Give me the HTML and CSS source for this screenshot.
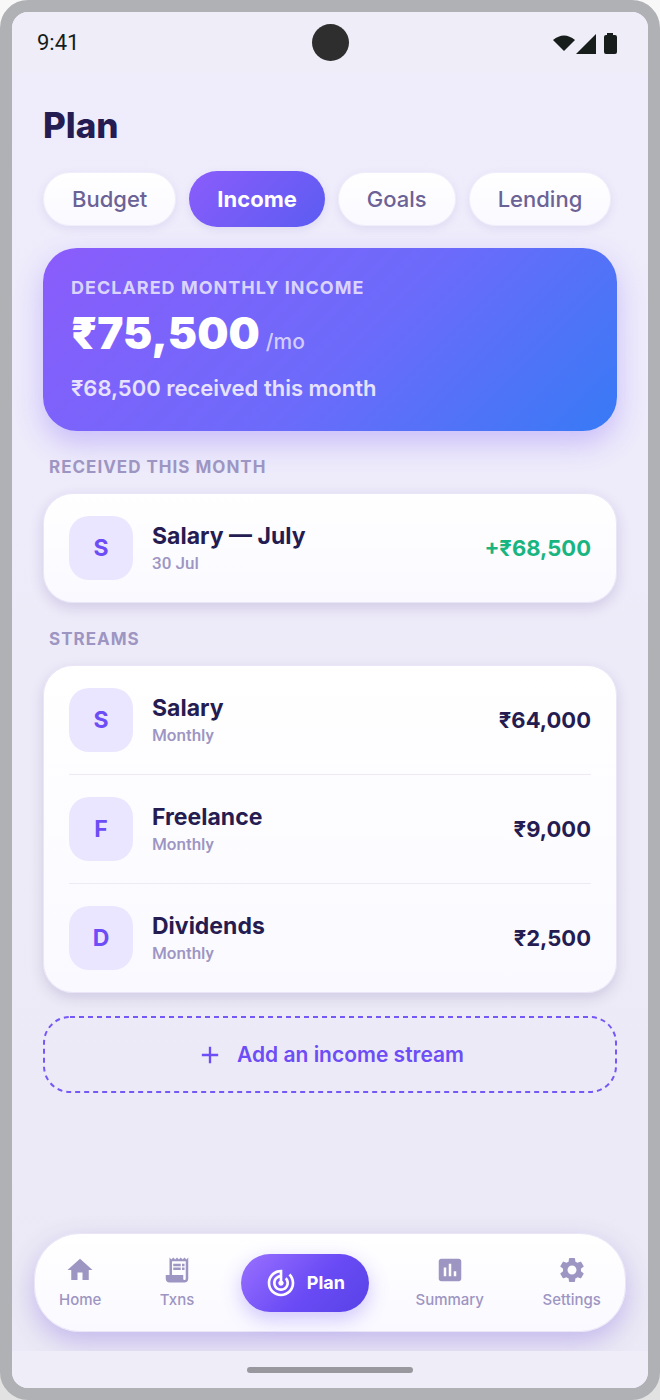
FILE: index.html
```html
<!DOCTYPE html>
<html lang="en">

<head>
    <meta charset="UTF-8">
    <meta name="viewport" content="width=device-width,initial-scale=1" />

    <title>Plan - Income</title>
    <link rel="stylesheet" href="styles.css">
</head>

<body>
    <div class="phone">
        <header class="status-bar">
            <span class="clock">9:41</span>
            <span class="camera"></span>
            <svg class="status-icons" viewBox="0 0 64 22" width="64" height="22" aria-hidden="true">
                <path d="M0 8Q11 -1 22 8L11 19z" />
                <path d="M43 2v20H23z" />
                <path d="M54 1h6v2h2q2 0 2 2v15q0 2-2 2h-9q-2 0-2-2V5q0-2 2-2h1z" />
            </svg>
        </header>

        <main class="content">
            <h1>Plan</h1>

            <div class="tabs">
                <button class="tab">Budget</button>
                <button class="tab tab-active">Income</button>
                <button class="tab">Goals</button>
                <button class="tab">Lending</button>
            </div>

            <section class="hero">
                <p class="hero-label">DECLARED MONTHLY INCOME</p>
                <p class="hero-amount">₹75,500 <span>/mo</span></p>
                <p class="hero-note">₹68,500 received this month</p>
            </section>

            <h2>RECEIVED THIS MONTH</h2>
            <ul class="card">
                <li class="row">
                    <span class="avatar">S</span>
                    <div class="row-text">
                        <h3>Salary — July</h3>
                        <p>30 Jul</p>
                    </div>
                    <span class="amount amount-in">+₹68,500</span>
                </li>
            </ul>

            <h2>STREAMS</h2>
            <ul class="card">
                <li class="row">
                    <span class="avatar">S</span>
                    <div class="row-text">
                        <h3>Salary</h3>
                        <p>Monthly</p>
                    </div>
                    <span class="amount">₹64,000</span>
                </li>
                <li class="row">
                    <span class="avatar">F</span>
                    <div class="row-text">
                        <h3>Freelance</h3>
                        <p>Monthly</p>
                    </div>
                    <span class="amount">₹9,000</span>
                </li>
                <li class="row">
                    <span class="avatar">D</span>
                    <div class="row-text">
                        <h3>Dividends</h3>
                        <p>Monthly</p>
                    </div>
                    <span class="amount">₹2,500</span>
                </li>
            </ul>

            <button class="add-button">
                <svg class="dashes" aria-hidden="true">
                    <rect width="100%" height="100%" rx="26" />
                </svg>
                <svg class="plus" viewBox="0 0 24 24" width="28" height="28" aria-hidden="true">
                    <path d="M12 5v14M5 12h14" />
                </svg>
                Add an income stream
            </button>
        </main>

        <nav class="nav">
            <a class="nav-item" href="#home">
                <svg viewBox="0 0 24 24" width="30" height="30" aria-hidden="true">
                    <path d="M10 20v-6h4v6h5v-8h3L12 3 2 12h3v8z" />
                </svg>
                Home
            </a>
            <a class="nav-item" href="#txns">
                <svg viewBox="0 0 24 24" width="30" height="30" aria-hidden="true">
                    <path d="M19.500 3.500L18 2l-1.500 1.500L15 2l-1.500 1.500L12 2l-1.500 1.500L9 2 7.500 3.500 6 2v14H3v3c0 1.660 1.340 3 3 3h12c1.660 0 3-1.340 3-3V2zM19 19c0 .55-.45 1-1 1s-1-.45-1-1v-3H8V5h11z" />
                    <path d="M9 7h6v2H9zM16 7h2v2h-2zM9 10h6v2H9zM16 10h2v2h-2z" />
                </svg>
                Txns
            </a>
            <a class="nav-item nav-active" href="#plan">
                <svg viewBox="0 0 24 24" width="32" height="32" aria-hidden="true">
                    <path d="M19.070 4.930l-1.410 1.410C19.100 7.790 20 9.790 20 12c0 4.420-3.580 8-8 8s-8-3.580-8-8c0-4.080 3.050-7.440 7-7.930v2.020C8.160 6.570 6 9.030 6 12c0 3.310 2.690 6 6 6s6-2.690 6-6c0-1.660-.67-3.160-1.760-4.240l-1.410 1.410C15.550 9.900 16 10.900 16 12c0 2.210-1.790 4-4 4s-4-1.790-4-4c0-1.860 1.280-3.410 3-3.860v2.140c-.6.35-1 .98-1 1.720 0 1.100.9 2 2 2s2-.9 2-2c0-.74-.4-1.380-1-1.720V2h-1C6.480 2 2 6.480 2 12s4.480 10 10 10 10-4.480 10-10c0-2.760-1.120-5.260-2.930-7.070z" />
                </svg>
                Plan
            </a>
            <a class="nav-item" href="#summary">
                <svg viewBox="0 0 24 24" width="30" height="30" aria-hidden="true">
                    <path d="M19 3H5c-1.100 0-2 .9-2 2v14c0 1.100.9 2 2 2h14c1.100 0 2-.9 2-2V5c0-1.100-.9-2-2-2zM9 17H7v-7h2zM13 17h-2V7h2zM17 17h-2v-4h2z" />
                </svg>
                Summary
            </a>
            <a class="nav-item" href="#settings">
                <svg viewBox="0 0 24 24" width="30" height="30" aria-hidden="true">
                    <path d="M19.140 12.940c.04-.3.060-.61.060-.94 0-.32-.02-.64-.07-.94l2.030-1.580c.18-.14.23-.41.12-.61l-1.920-3.320c-.12-.22-.37-.29-.59-.22l-2.390.96c-.5-.38-1.030-.7-1.620-.94l-.36-2.540c-.04-.24-.24-.41-.48-.41h-3.840c-.24 0-.43.17-.47.41l-.36 2.540c-.59.24-1.130.57-1.620.94l-2.390-.96c-.22-.08-.47 0-.59.22L2.740 8.870c-.12.21-.08.47.12.61l2.030 1.580c-.05.3-.09.63-.09.94s.02.64.07.94l-2.030 1.580c-.18.14-.23.41-.12.61l1.920 3.320c.12.22.37.29.59.22l2.390-.96c.5.38 1.030.7 1.620.94l.36 2.540c.05.24.24.41.48.41h3.840c.24 0 .44-.17.47-.41l.36-2.540c.59-.24 1.130-.56 1.620-.94l2.390.96c.22.08.47 0 .59-.22l1.920-3.320c.12-.22.07-.47-.12-.61l-2.010-1.580zM12 15.600c-1.980 0-3.600-1.620-3.600-3.600s1.620-3.600 3.600-3.600 3.600 1.620 3.600 3.600-1.620 3.600-3.600 3.600z" />
                </svg>
                Settings
            </a>
        </nav>

        <footer class="home-bar"><span></span></footer>
    </div>
</body>

</html>
```

FILE: styles.css
```css
* {
    box-sizing: border-box;
}

body {
    margin: 0;
    background: linear-gradient(#f8f8f8, #e2e2e2);
    color: #251c52;
    font-family: Inter, "Liberation Sans", sans-serif;
}

h1, h2, h3, p, ul {
    margin: 0;
    padding: 0;
}

button {
    font-family: inherit;
    border: 0;
}

.phone {
    display: flex;
    flex-direction: column;
    min-height: 100vh;
    border: 12px solid #b0b1b5;
    border-radius: 28px;
    overflow: hidden;
    background: linear-gradient(#efedfb, #eeebfb 30%, #edebf7 60%, #ebe9f5);
}

/* status bar */
.status-bar {
    display: grid;
    grid-template-columns: 1fr auto 1fr;
    align-items: center;
    height: 61px;
    padding: 0 25px;
    background: #efedf8;
}

.clock {
    font-family: Roboto, sans-serif;
    font-size: 22px;
    line-height: 24px;
    color: #171d1b;
}

.camera {
    width: 37px;
    height: 37px;
    border-radius: 50%;
    background: #2e2e2e;
}

.status-icons {
    justify-self: end;
    margin-right: 6px;
    fill: #171d1b;
}

/* page */
.content {
    flex: 1;
    padding: 32px 31px 0;
}

h1 {
    font-size: 35px;
    line-height: 40px;
    font-weight: 800;
}

h2 {
    margin: 24px 0 14px;
    padding-left: 6px;
    font-size: 17px;
    line-height: 24px;
    font-weight: 700;
    letter-spacing: 1px;
    color: #9d95c2;
}

.tabs {
    display: flex;
    align-items: center;
    gap: 13px;
    margin: 26px 0 21px;
}

.tab {
    height: 54px;
    padding: 0 28px;
    border: 1px solid #f1eefb;
    border-radius: 28px;
    background: linear-gradient(#ffffff, #faf9ff);
    color: #6b6296;
    font-size: 22px;
    font-weight: 500;
    box-shadow: 0 3px 8px rgba(90, 70, 170, 0.1);
}

.tab-active {
    height: 56px;
    border: 0;
    background: linear-gradient(135deg, #8b5cfb, #5b5cf2);
    color: #ffffff;
    font-weight: 700;
}

.hero {
    padding: 28px;
    border-radius: 34px;
    background: linear-gradient(135deg, #8b5cfb, #6b6bfa 55%, #377af5);
    color: #ffffff;
    box-shadow: 0 12px 28px rgba(124, 92, 250, 0.32);
}

.hero-label {
    font-size: 18px;
    line-height: 24px;
    font-weight: 700;
    letter-spacing: 1px;
    color: #dbd4fe;
}

.hero-amount {
    display: flex;
    align-items: baseline;
    gap: 6px;
    margin: 5px 0 12px;
    font-size: 44px;
    line-height: 56px;
    font-weight: 900;
}

.hero-amount span {
    font-size: 21px;
    line-height: 28px;
    font-weight: 500;
    color: #d3cdfe;
}

.hero-note {
    font-size: 22px;
    line-height: 30px;
    font-weight: 600;
    color: #e6e2ff;
}

.card {
    padding: 0 25px;
    border: 1px solid #eae6f8;
    border-radius: 30px;
    background: linear-gradient(#ffffff, #faf9ff);
    box-shadow: 0 5px 14px rgba(60, 40, 130, 0.16);
    list-style: none;
}

.row {
    display: flex;
    align-items: center;
    gap: 19px;
    padding: 22px 0;
}

.row + .row {
    border-top: 1px solid #edeaf6;
}

.avatar {
    width: 64px;
    border-radius: 20px;
    background: #ebe6ff;
    color: #6c4df6;
    font-size: 23px;
    line-height: 64px;
    font-weight: 700;
    text-align: center;
}

.row-text {
    flex: 1;
}

.row-text h3 {
    font-size: 23px;
    line-height: 30px;
    font-weight: 700;
}

.row-text p {
    font-family: Roboto, sans-serif;
    font-size: 17px;
    line-height: 24px;
    font-weight: 500;
    color: #9d95c2;
}

.amount {
    font-size: 22px;
    font-weight: 700;
}

.amount-in {
    color: #19b580;
}

.add-button {
    position: relative;
    display: flex;
    align-items: center;
    justify-content: center;
    gap: 13px;
    width: 100%;
    height: 77px;
    margin-top: 23px;
    background: none;
    color: #6c4df6;
    font-size: 21px;
    font-weight: 600;
}

/* outline drawn as svg so the dash length can be set */
.dashes {
    position: absolute;
    inset: 1px;
    width: calc(100% - 2px);
    height: calc(100% - 2px);
    overflow: visible;
    fill: none;
    stroke: #7657f7;
    stroke-width: 2px;
    stroke-dasharray: 5 4;
}

.plus {
    fill: none;
    stroke: #6c4df6;
    stroke-width: 2px;
}

/* bottom navigation */
.nav {
    display: flex;
    align-items: center;
    justify-content: space-between;
    height: 99px;
    margin: 0 22px 19px;
    padding: 0 12px;
    border: 1px solid #eae6f8;
    border-radius: 46px;
    background: linear-gradient(#ffffff, #faf9ff);
    box-shadow: 0 10px 26px rgba(108, 77, 220, 0.3);
}

.nav-item {
    display: flex;
    flex-direction: column;
    align-items: center;
    gap: 5px;
    padding: 0 12px;
    color: #9d95c2;
    fill: #9d95c2;
    font-size: 15px;
    line-height: 20px;
    font-weight: 500;
    text-decoration: none;
}

.nav-active {
    flex-direction: row;
    gap: 10px;
    height: 58px;
    padding: 0 24px;
    border-radius: 29px;
    background: linear-gradient(135deg, #9a70ff, #6a4bf5 55%, #5742e6);
    color: #ffffff;
    fill: #ffffff;
    font-size: 18px;
    font-weight: 700;
    box-shadow: 0 7px 20px rgba(108, 77, 246, 0.3);
}

.home-bar {
    display: flex;
    align-items: center;
    justify-content: center;
    height: 37px;
    background: #efedf8;
}

.home-bar span {
    width: 166px;
    height: 6px;
    border-radius: 3px;
    background: #98989e;
}
```
